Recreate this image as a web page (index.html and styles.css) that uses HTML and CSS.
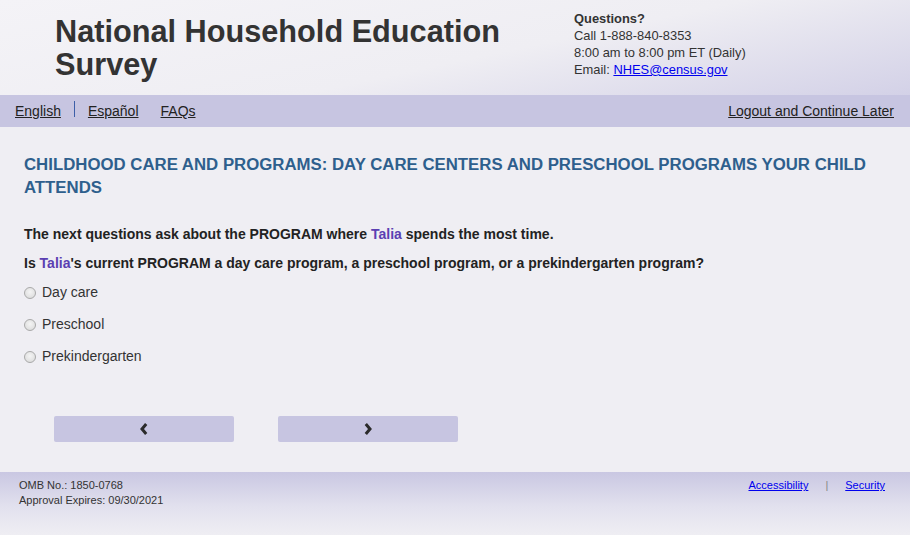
FILE: index.html
```html
<!DOCTYPE html>
<html lang="en">
<head>
<meta charset="utf-8">
<title>National Household Education Survey</title>
<link rel="stylesheet" href="styles.css">
</head>
<body>
<header class="masthead">
  <h1 class="site-title">National Household Education Survey</h1>
  <div class="contact">
    <div class="contact-q">Questions?</div>
    <div>Call 1-888-840-8353</div>
    <div>8:00 am to 8:00 pm ET (Daily)</div>
    <div>Email: <a href="#" class="mail">NHES@census.gov</a></div>
  </div>
</header>
<nav class="navbar">
  <div class="nav-left">
    <a href="#" class="nav-link">English</a>
    <span class="nav-sep"></span>
    <a href="#" class="nav-link">Español</a>
    <a href="#" class="nav-link faq">FAQs</a>
  </div>
  <a href="#" class="nav-link">Logout and Continue Later</a>
</nav>
<main class="content">
  <h2 class="section-title">CHILDHOOD CARE AND PROGRAMS: DAY CARE CENTERS AND PRESCHOOL PROGRAMS YOUR CHILD ATTENDS</h2>
  <p class="intro">The next questions ask about the PROGRAM where <span class="name">Talia</span> spends the most time.</p>
  <p class="question">Is <span class="name">Talia</span>'s current PROGRAM a day care program, a preschool program, or a prekindergarten program?</p>
  <div class="options">
    <label class="option"><span class="radio"></span>Day care</label>
    <label class="option"><span class="radio"></span>Preschool</label>
    <label class="option"><span class="radio"></span>Prekindergarten</label>
  </div>
  <div class="buttons">
    <button class="navbtn" aria-label="Previous">
      <svg width="10" height="14" viewBox="0 0 10 14"><path d="M7.2 2 L3 7 L7.2 12" fill="none" stroke="#2b2b2b" stroke-width="3"/></svg>
    </button>
    <button class="navbtn" aria-label="Next">
      <svg width="10" height="14" viewBox="0 0 10 14"><path d="M2.8 2 L7 7 L2.8 12" fill="none" stroke="#2b2b2b" stroke-width="3"/></svg>
    </button>
  </div>
</main>
<footer class="footer">
  <div class="omb">
    <div>OMB No.: 1850-0768</div>
    <div>Approval Expires: 09/30/2021</div>
  </div>
  <div class="footer-links">
    <a href="#" class="flink">Accessibility</a>
    <span class="fsep">|</span>
    <a href="#" class="flink">Security</a>
  </div>
</footer>
</body>
</html>
```
FILE: styles.css
```css
* { box-sizing: border-box; }
html, body { margin: 0; padding: 0; }
body {
  font-family: "Liberation Sans", Arial, sans-serif;
  background: #efeef3;
  color: #333;
  width: 910px;
  height: 535px;
  overflow: hidden;
}
.masthead {
  height: 95px;
  display: flex;
  background: linear-gradient(168deg, #f4f3f7 0%, #efeef3 55%, #d3d1e7 100%);
}
.site-title {
  margin: 0;
  padding: 15px 0 0 55px;
  width: 574px;
  font-size: 30.7px;
  line-height: 33px;
  font-weight: bold;
  color: #333;
}
.contact {
  padding-top: 10px;
  font-size: 12.9px;
  line-height: 17px;
  color: #333;
}
.contact-q { font-weight: bold; }
.mail { color: #0000ee; }
.navbar {
  height: 32px;
  background: #c7c5e1;
  display: flex;
  align-items: center;
  justify-content: space-between;
  padding: 0 16px 0 15px;
}
.nav-left { display: flex; align-items: center; }
.nav-link {
  color: #222;
  font-size: 14px;
  text-decoration: underline;
}
.nav-sep {
  display: inline-block;
  width: 1px;
  height: 16px;
  background: #3d5fa8;
  margin: -4px 13px 0 13px;
}
.faq { margin-left: 22px; }
.content { padding: 0 24px; height: 345px; }
.section-title {
  margin: 0;
  padding-top: 26px;
  font-size: 16.8px;
  line-height: 23px;
  font-weight: bold;
  color: #2e5f8d;
}
.intro, .question {
  margin: 0;
  font-size: 14px;
  font-weight: bold;
  color: #222;
  line-height: 17px;
}
.intro { margin-top: 27px; }
.question { margin-top: 12px; }
.name { color: #5b3fb2; }
.options { display: flex; flex-direction: column; gap: 15px; margin-top: 12px; }
.option {
  display: flex;
  align-items: center;
  font-size: 14px;
  line-height: 17px;
  color: #333;
}
.radio {
  width: 12px;
  height: 12px;
  border-radius: 50%;
  border: 1px solid #a9a9a9;
  background: radial-gradient(circle at 50% 40%, #f4f4f4, #d8d8d8);
  margin-right: 6px;
}
.buttons {
  display: flex;
  gap: 44px;
  margin-top: 51px;
  padding-left: 30px;
}
.navbtn {
  width: 180px;
  height: 26px;
  border: none;
  border-radius: 2px;
  background: #c7c5e1;
  display: flex;
  align-items: center;
  justify-content: center;
  padding: 0;
}
.footer {
  height: 63px;
  background: linear-gradient(180deg, #c9c7e2 0%, #e2e1ee 55%, #efeef3 100%);
  display: flex;
  justify-content: space-between;
  padding: 6px 25px 0 19px;
  font-size: 11px;
  line-height: 15px;
  color: #333;
}
.footer-links { display: flex; gap: 0; }
.flink { color: #0000ee; font-size: 11px; }
.fsep { color: #888; margin: 0 17px; }
```
